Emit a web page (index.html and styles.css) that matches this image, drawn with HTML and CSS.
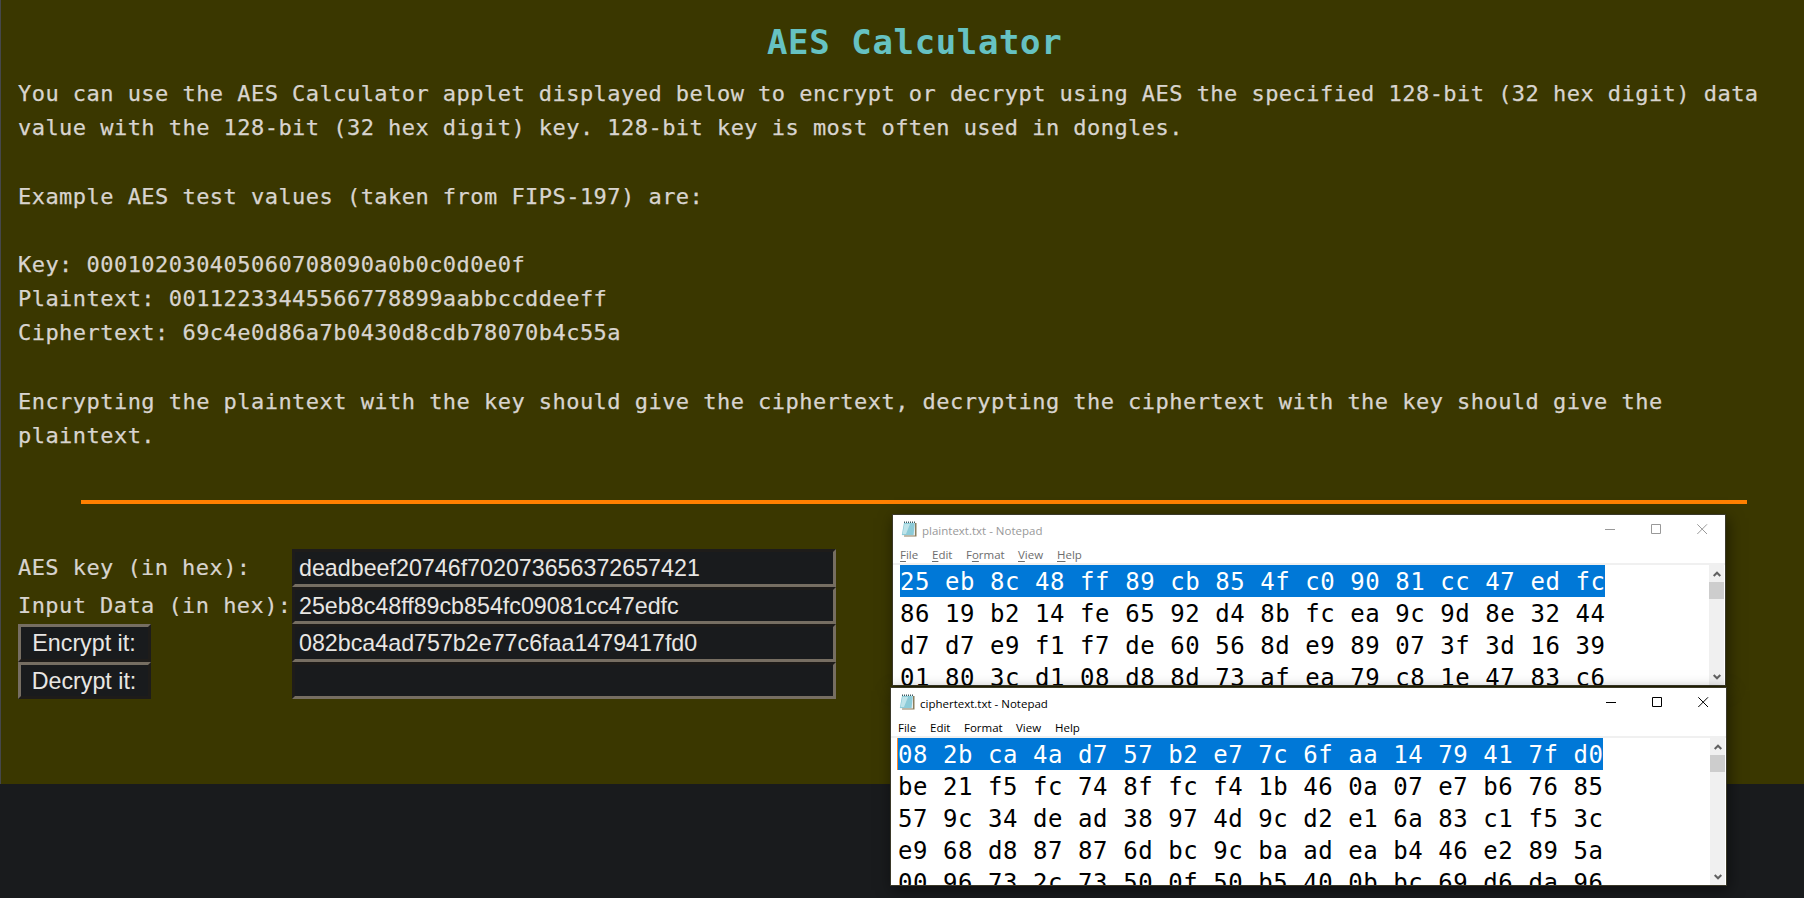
FILE: index.html
```html
<!DOCTYPE html>
<html lang="en">
<head>
<meta charset="utf-8">
<title>AES Calculator</title>
<link rel="stylesheet" href="styles.css">
</head>
<body>
<svg class="defs" width="0" height="0">
  <symbol id="pad" viewBox="0 0 16 16">
    <path d="M4 2H15.5V15.5H3z" fill="#8a7d5c"/>
    <path d="M3 1.5H14V14.5H1z" fill="#e8eef0"/>
    <path d="M3 2H13.8L12.6 14H0.8z" fill="#8ccbd8"/>
    <path d="M3.5 3H9L5 13H1.6z" fill="#bfe4ea"/>
    <path d="M3 1.3H14.5" stroke="#3d5960" stroke-width="1.6" stroke-dasharray="1 1"/>
  </symbol>
  <symbol id="min" viewBox="0 0 11 11"><path d="M0 5.5H10" stroke="currentColor"/></symbol>
  <symbol id="max" viewBox="0 0 11 11"><path d="M.5.5H9.5V9.5H.5z" stroke="currentColor" fill="none"/></symbol>
  <symbol id="close" viewBox="0 0 11 11"><path d="M.3.3L10 10M10 .3L.3 10" stroke="currentColor"/></symbol>
  <symbol id="up" viewBox="0 0 8 6"><path d="M.7 5L4 1.7L7.3 5" stroke="#606060" stroke-width="2" fill="none"/></symbol>
  <symbol id="down" viewBox="0 0 8 6"><path d="M.7 1L4 4.3L7.3 1" stroke="#606060" stroke-width="2" fill="none"/></symbol>
</svg>
<main class="page">
  <h1 class="title">AES Calculator</h1>
  <div class="copy">
    <p>You can use the AES Calculator applet displayed below to encrypt or decrypt using AES the specified 128-bit (32 hex digit) data<br>value with the 128-bit (32 hex digit) key. 128-bit key is most often used in dongles.</p>
    <p>Example AES test values (taken from FIPS-197) are:</p>
    <p>Key: 000102030405060708090a0b0c0d0e0f<br>Plaintext: 00112233445566778899aabbccddeeff<br>Ciphertext: 69c4e0d86a7b0430d8cdb78070b4c55a</p>
    <p>Encrypting the plaintext with the key should give the ciphertext, decrypting the ciphertext with the key should give the<br>plaintext.</p>
  </div>
  <hr class="rule">
  <form class="calc">
    <label class="label">AES key (in hex):</label>
    <div class="field">deadbeef20746f702073656372657421</div>
    <label class="label">Input Data (in hex):</label>
    <div class="field">25eb8c48ff89cb854fc09081cc47edfc</div>
    <button type="button" class="btn">Encrypt it:</button>
    <div class="field">082bca4ad757b2e77c6faa1479417fd0</div>
    <button type="button" class="btn">Decrypt it:</button>
    <div class="field"></div>
  </form>
</main>

<section class="window plain">
  <header class="bar">
    <svg class="icon"><use href="#pad"/></svg><span class="name">plaintext.txt - Notepad</span>
    <span class="controls"><svg><use href="#min"/></svg><svg><use href="#max"/></svg><svg><use href="#close"/></svg></span>
  </header>
  <nav class="menu"><span class="m1"><u>F</u>ile</span><span class="m2"><u>E</u>dit</span><span class="m3">F<u>o</u>rmat</span><span class="m4"><u>V</u>iew</span><span><u>H</u>elp</span></nav>
  <div class="body">
    <div class="text">
      <div class="row sel">25 eb 8c 48 ff 89 cb 85 4f c0 90 81 cc 47 ed fc</div>
      <div class="row">86 19 b2 14 fe 65 92 d4 8b fc ea 9c 9d 8e 32 44</div>
      <div class="row">d7 d7 e9 f1 f7 de 60 56 8d e9 89 07 3f 3d 16 39</div>
      <div class="row">01 80 3c d1 08 d8 8d 73 af ea 79 c8 1e 47 83 c6</div>
    </div>
    <div class="scroll"><svg><use href="#up"/></svg><i class="thumb"></i><svg class="dn"><use href="#down"/></svg></div>
  </div>
</section>

<section class="window cipher">
  <header class="bar">
    <svg class="icon"><use href="#pad"/></svg><span class="name">ciphertext.txt - Notepad</span>
    <span class="controls"><svg><use href="#min"/></svg><svg><use href="#max"/></svg><svg><use href="#close"/></svg></span>
  </header>
  <nav class="menu"><span class="m1">File</span><span class="m2">Edit</span><span class="m3">Format</span><span class="m4">View</span><span>Help</span></nav>
  <div class="body">
    <div class="text">
      <div class="row sel">08 2b ca 4a d7 57 b2 e7 7c 6f aa 14 79 41 7f d0</div>
      <div class="row">be 21 f5 fc 74 8f fc f4 1b 46 0a 07 e7 b6 76 85</div>
      <div class="row">57 9c 34 de ad 38 97 4d 9c d2 e1 6a 83 c1 f5 3c</div>
      <div class="row">e9 68 d8 87 87 6d bc 9c ba ad ea b4 46 e2 89 5a</div>
      <div class="row">00 96 73 2c 73 50 0f 50 b5 40 0b bc 69 d6 da 96</div>
    </div>
    <div class="scroll"><svg><use href="#up"/></svg><i class="thumb"></i><svg class="dn"><use href="#down"/></svg></div>
  </div>
</section>
</body>
</html>
```
FILE: styles.css
```css
* { box-sizing: border-box; }
html { background: #191b1d; }
body {
  margin: 0;
  height: 898px;
  overflow: hidden;
  position: relative;
  font-family: "DejaVu Sans Mono", monospace;
}
.defs { display: block; height: 0; }
.page {
  height: 784px;
  padding: 20px 39px 0 17px;
  background: #3a3700;
  border-left: 1px solid #45474a;
  color: #d8d4cf;
}
.title {
  margin: 0;
  padding-left: 749px;
  font-size: 34px;
  line-height: 44px;
  letter-spacing: 0.62px;
  color: #66c2c2;
}
.copy { padding-top: 13px; }
.copy p {
  margin: 0 0 34.2px;
  font-size: 22px;
  line-height: 34.2px;
  letter-spacing: 0.46px;
  white-space: nowrap;
  -webkit-text-stroke: 0.25px currentColor;
}
.rule {
  height: 4px;
  margin: 47px 18px 0 63px;
  border: 0;
  background: #ff8000;
}
.calc {
  display: grid;
  grid-template-columns: 274px 544px;
  grid-template-rows: 38px 37px 38px 37px;
  margin-top: 45px;
}
.label {
  font-size: 22px;
  line-height: 38px;
  letter-spacing: 0.43px;
  white-space: nowrap;
  -webkit-text-stroke: 0.2px currentColor;
}
.field, .btn {
  font: 23.25px/32px "Liberation Sans", Arial, sans-serif;
  color: #e8e6e3;
  background: #191b1d;
  border: 3px solid #766e62;
  white-space: nowrap;
}
.field {
  padding: 0 4px;
  border-color: #1e1c1a #766e62 #766e62 #1e1c1a;
}
.btn {
  justify-self: start;
  width: 133px;
  padding: 0 1px 0 0;
  border-color: #766e62 #1e1c1a #1e1c1a #766e62;
}
.window {
  position: absolute;
  display: flex;
  flex-direction: column;
  background: #fff;
  box-shadow: 0 0 0 1px #3a3828, 2px 4px 14px 1px rgba(0, 0, 0, 0.5);
  font-family: "Open Sans", sans-serif;
  font-size: 11.5px;
}
.plain {
  left: 893px;
  top: 515px;
  width: 832px;
  height: 170px;
  color: #6d6d6d;
}
.cipher {
  left: 891px;
  top: 688px;
  width: 835px;
  height: 197px;
  color: #000;
}
.bar {
  display: flex;
  align-items: center;
  height: 30px;
  padding: 0 17px 0 8px;
}
.plain .bar { color: #999; }
.icon { width: 16px; height: 16px; margin: -2px 5px 0 0; }
.controls {
  display: flex;
  gap: 35px;
  margin: -1px 0 0 auto;
}
.controls svg { width: 11px; height: 11px; }
.menu {
  display: flex;
  height: 20px;
  padding: 1px 0 0 7px;
  line-height: 18px;
  border-bottom: 2px solid #f0f0f0;
  flex: none;
}
.menu u { text-underline-offset: 2px; }
.m1 { width: 32px; }
.m2 { width: 34px; }
.m3 { width: 52px; }
.m4 { width: 39px; }
.body {
  display: flex;
  flex: 1;
  min-height: 0;
  overflow: hidden;
}
.text {
  display: flex;
  flex: 1;
  flex-direction: column;
  align-items: flex-start;
  padding-left: 7px;
  color: #000;
  font: 24px/35px "DejaVu Sans Mono", monospace;
  letter-spacing: 0.56px;
  white-space: pre;
}
.row { flex: none; height: 32px; }
.sel { color: #fff; background: #0078d7; }
.cipher .sel { box-shadow: -1px 0 0 #ff8728; }
.scroll {
  display: flex;
  flex-direction: column;
  align-items: center;
  width: 15px;
  margin-right: 1px;
  background: #f0f0f0;
}
.scroll svg { width: 8px; height: 6px; margin-top: 6px; }
.thumb {
  width: 15px;
  height: 17px;
  margin-top: 5px;
  background: #cdcdcd;
}
.scroll .dn { margin: auto 0 5px; }
```
